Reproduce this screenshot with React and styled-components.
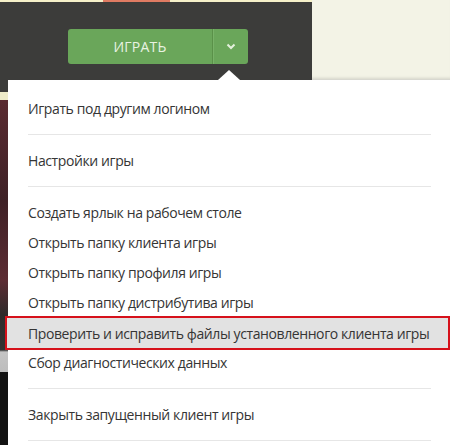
import React from 'react'
import styled, { createGlobalStyle } from 'styled-components'

const GlobalStyle = createGlobalStyle`
  html, body {
    margin: 0;
    padding: 0;
    background: #ffffff;
    overflow: hidden;
  }
  body {
    font-family: "Open Sans", "Liberation Sans", sans-serif;
  }
`

const Page = styled.div`
  width: 450px;
  height: 445px;
  overflow: hidden;
  display: flex;
  flex-direction: column;
`

const Header = styled.div`
  display: flex;
  height: 80px;
  flex-shrink: 0;
`

const LauncherArea = styled.div`
  width: 312px;
  display: flex;
  flex-direction: column;
`

const TopStrip = styled.div`
  height: 2px;
  background: #f6f1c9;
  display: flex;
`

const Tab = styled.div`
  width: 67px;
  margin-left: 103px;
  background: #e07b62;
`

const DarkPanel = styled.div`
  flex: 1;
  background: #3c3c3a;
  display: flex;
  padding: 27px 0 0 68px;
  align-items: flex-start;
`

const CreamPanel = styled.div`
  flex: 1;
  background: #f3f3e6;
  border-bottom: 1px solid #d8d8d0;
  box-shadow: inset 0 -3px 3px -2px rgba(0, 0, 0, 0.12);
`

const SplitButton = styled.div`
  display: flex;
  height: 35px;
  border-radius: 3px;
  overflow: hidden;
  background: #6aa65a;
`

const PlayButton = styled.div`
  width: 144px;
  display: flex;
  align-items: center;
  justify-content: center;
  color: #e9f3e2;
  font-size: 14px;
  letter-spacing: 0.2px;
`

const ArrowButton = styled.div`
  width: 35px;
  display: flex;
  align-items: center;
  justify-content: center;
  border-left: 1px solid #5a9149;
  box-shadow: inset 1px 0 0 #78b268;
`

const Body = styled.div`
  flex: 1;
  display: flex;
`

const SideStrip = styled.div`
  width: 8px;
  flex-shrink: 0;
  background: linear-gradient(
    to bottom,
    #3c3c3a 0px,
    #3c3c3a 12px,
    #eeebc9 12px,
    #eeebc9 20px,
    #5a2b31 20px,
    #3e2126 120px,
    #5c2c33 200px,
    #2e2a2a 235px,
    #333 270px,
    #c4c4c4 272px,
    #bdbdbd 292px,
    #121212 292px
  );
`

const Menu = styled.div`
  flex: 1;
  background: #ffffff;
  position: relative;
  padding-top: 3px;

  &::before {
    content: '';
    position: absolute;
    top: -10px;
    left: 210px;
    border-left: 11px solid transparent;
    border-right: 11px solid transparent;
    border-bottom: 10px solid #ffffff;
  }
`

const Group = styled.div`
  padding: 10px 0 11px;
  border-bottom: 1px solid #e6e6e6;
  margin-right: 19px;
  margin-left: 20px;
`

const Item = styled.div`
  height: 30px;
  display: flex;
  align-items: center;
  font-size: 14px;
  letter-spacing: -0.4px;
  color: #353535;
  white-space: nowrap;
  margin-left: ${(p) => (p.$active ? '-21px' : '0')};
  margin-right: ${(p) => (p.$active ? '-17px' : '0')};
  padding-left: ${(p) => (p.$active ? '21px' : '0')};
  background: ${(p) => (p.$active ? '#e2e2e2' : 'transparent')};
  box-shadow: ${(p) => (p.$active ? '0 0 0 2px #d6111b' : 'none')};
  position: relative;
  top: ${(p) => (p.$active ? '1px' : '0')};
`

const Chevron = () => (
  <svg width="10" height="7" viewBox="0 0 10 7">
    <path d="M1.5 1.5 L5 5 L8.5 1.5" fill="none" stroke="#e4f0dc" strokeWidth="2" />
  </svg>
)

const groups = [
  [{ text: 'Играть под другим логином' }],
  [{ text: 'Настройки игры' }],
  [
    { text: 'Создать ярлык на рабочем столе' },
    { text: 'Открыть папку клиента игры' },
    { text: 'Открыть папку профиля игры' },
    { text: 'Открыть папку дистрибутива игры' },
    { text: 'Проверить и исправить файлы установленного клиента игры', active: true },
    { text: 'Сбор диагностических данных' },
  ],
  [{ text: 'Закрыть запущенный клиент игры' }],
]

export default function App() {
  return (
    <Page>
      <GlobalStyle />
      <Header>
        <LauncherArea>
          <TopStrip>
            <Tab />
          </TopStrip>
          <DarkPanel>
            <SplitButton>
              <PlayButton>ИГРАТЬ</PlayButton>
              <ArrowButton>
                <Chevron />
              </ArrowButton>
            </SplitButton>
          </DarkPanel>
        </LauncherArea>
        <CreamPanel />
      </Header>
      <Body>
        <SideStrip />
        <Menu>
          {groups.map((g, i) => (
            <Group key={i}>
              {g.map((item) => (
                <Item key={item.text} $active={item.active}>
                  {item.text}
                </Item>
              ))}
            </Group>
          ))}
        </Menu>
      </Body>
    </Page>
  )
}
